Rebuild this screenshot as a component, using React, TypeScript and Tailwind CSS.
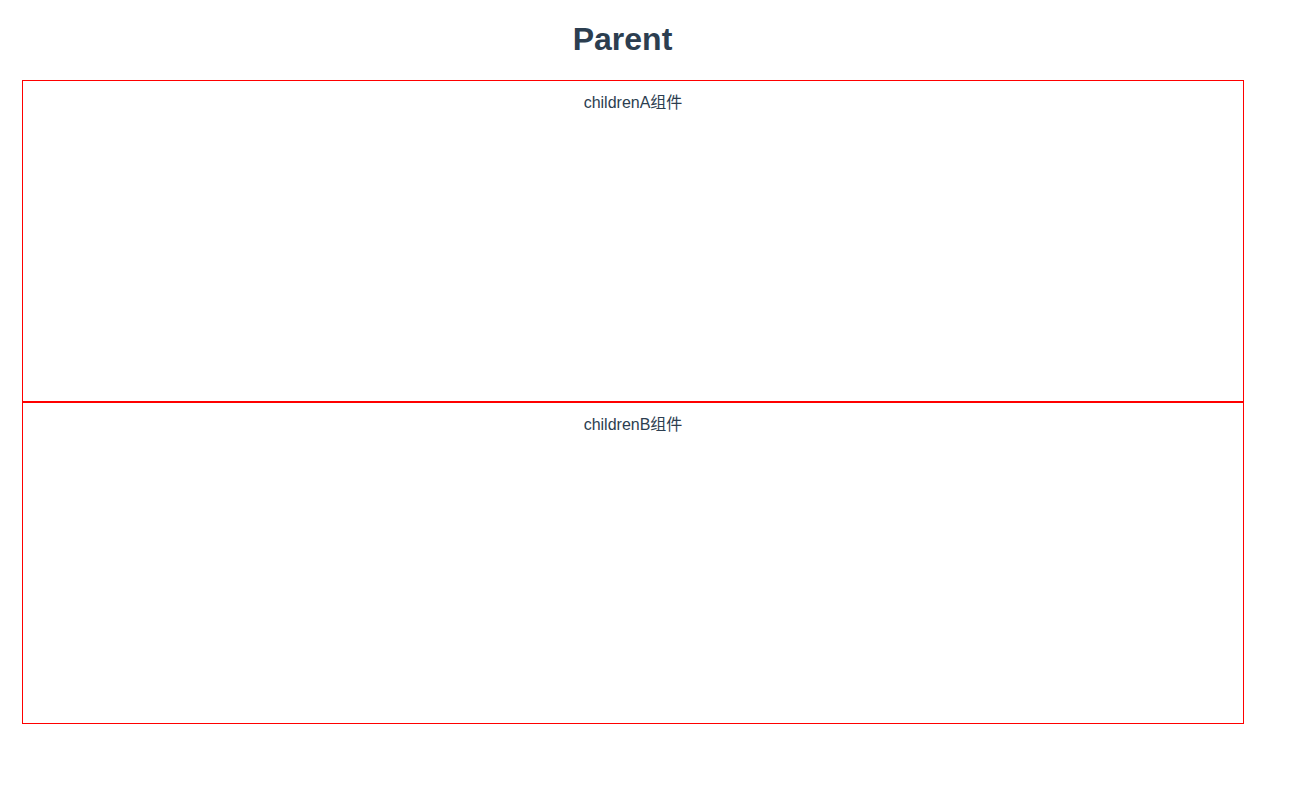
function Child({ name }: { name: string }) {
  return (
    <div className="h-[322px] w-[1222px] border border-[#ff0000] pt-[10px] text-center text-base">
      {name}组件
    </div>
  );
}

export default function App() {
  return (
    <div
      className="min-h-[792px] bg-white text-[#2c3e50]"
      style={{ fontFamily: '"Liberation Sans", Arial, "Noto Sans CJK SC", sans-serif' }}
    >
      <h1 className="w-[1245px] pt-[21px] text-center text-[32px] font-bold leading-[37px]">Parent</h1>
      <div className="ml-[22px] mt-[22px] flex flex-col">
        <Child name="childrenA" />
        <Child name="childrenB" />
      </div>
    </div>
  );
}
